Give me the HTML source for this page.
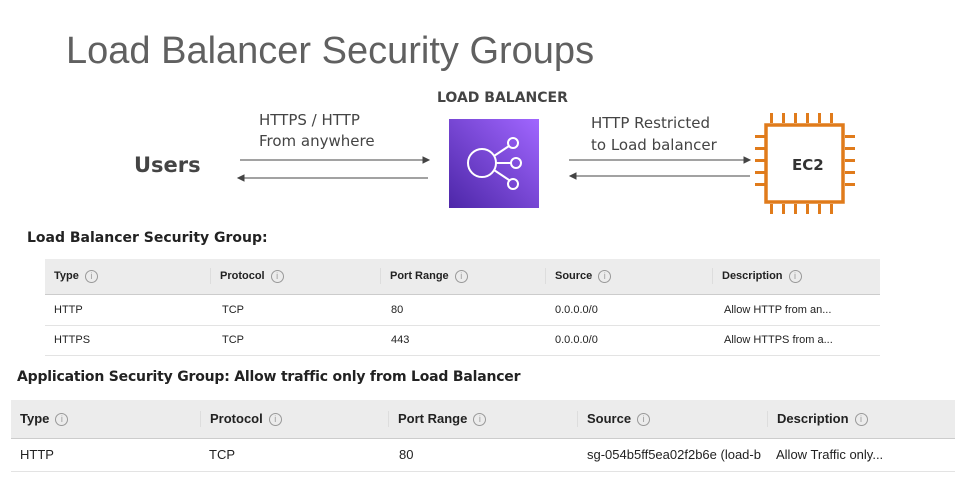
<!DOCTYPE html>
<html><head><style>
body{margin:0;width:961px;height:481px;background:#fff;position:relative;overflow:hidden;font-family:"Liberation Sans",sans-serif}
.a{position:absolute}
.t{position:absolute;font-family:"DejaVu Sans","Liberation Sans",sans-serif;color:#444;white-space:nowrap}
table{position:absolute;border-collapse:collapse;font-size:11px;color:#222}
th{background:#ececec;text-align:left;font-weight:bold;border-bottom:1px solid #ccc;padding:0;vertical-align:middle}
td{border-bottom:1px solid #e3e3e3;padding:0;vertical-align:middle}
th span.c,td span.c{display:block;padding-left:9px;line-height:16px}
th span.s{border-left:1px solid #ddd}
.i{display:inline-block;width:11px;height:11px;border:1px solid #999;border-radius:50%;font-size:9px;line-height:11px;text-align:center;color:#999;font-weight:normal;margin-left:6px;vertical-align:middle;font-style:normal}
</style></head><body>
<div class="t" style="left:66px;top:30px;font-size:38px;font-weight:300;color:#606060;font-family:'Liberation Sans',sans-serif">Load Balancer Security Groups</div>
<div class="t" style="left:437px;top:90px;font-size:14px;font-weight:bold">LOAD BALANCER</div>
<div class="t" style="left:259px;top:110px;font-size:15px;line-height:21px">HTTPS / HTTP<br>From anywhere</div>
<div class="t" style="left:591px;top:112px;font-size:15px;line-height:22px">HTTP Restricted<br>to Load balancer</div>
<div class="t" style="left:134px;top:153px;font-size:21px;font-weight:bold">Users</div>
<svg class="a" style="left:0;top:0" width="961" height="240">
<defs><linearGradient id="g" x1="0" y1="1" x2="1" y2="0"><stop offset="0" stop-color="#4d27a8"/><stop offset="1" stop-color="#a166ff"/></linearGradient></defs>
<g stroke="#444" stroke-width="1" fill="#444">
<line x1="240" y1="160" x2="425" y2="160"/><path d="M429 160l-6-3v6z"/>
<line x1="242" y1="178" x2="428" y2="178"/><path d="M238 178l6-3v6z"/>
<line x1="569" y1="160" x2="746" y2="160"/><path d="M750 160l-6-3v6z"/>
<line x1="574" y1="176" x2="750" y2="176"/><path d="M570 176l6-3v6z"/>
</g>
<rect x="449" y="119" width="90" height="89" fill="url(#g)"/>
<g stroke="#fff" stroke-width="2" fill="none">
<circle cx="482" cy="163" r="14"/><circle cx="513" cy="143" r="5"/><circle cx="516" cy="163" r="5"/><circle cx="513" cy="184" r="5"/>
<path d="M496 163h15M494 156l15-10M494 170l15 10"/></g>
<g fill="#e07b1b">
<rect x="766" y="125" width="77" height="77" fill="none" stroke="#e07b1b" stroke-width="3.5"/>
<rect x="770" y="113" width="3" height="10"/><rect x="782" y="113" width="3" height="10"/><rect x="794" y="113" width="3" height="10"/><rect x="806" y="113" width="3" height="10"/><rect x="818" y="113" width="3" height="10"/><rect x="830" y="113" width="3" height="10"/>
<rect x="770" y="204" width="3" height="10"/><rect x="782" y="204" width="3" height="10"/><rect x="794" y="204" width="3" height="10"/><rect x="806" y="204" width="3" height="10"/><rect x="818" y="204" width="3" height="10"/><rect x="830" y="204" width="3" height="10"/>
<rect x="755" y="135" width="10" height="3"/><rect x="755" y="147" width="10" height="3"/><rect x="755" y="159" width="10" height="3"/><rect x="755" y="171" width="10" height="3"/><rect x="755" y="183" width="10" height="3"/>
<rect x="845" y="135" width="10" height="3"/><rect x="845" y="147" width="10" height="3"/><rect x="845" y="159" width="10" height="3"/><rect x="845" y="171" width="10" height="3"/><rect x="845" y="183" width="10" height="3"/>
</g>
<text x="792" y="170" font-family="DejaVu Sans" font-weight="bold" font-size="15" fill="#333">EC2</text>
</svg>
<div class="t" style="left:27px;top:230px;font-size:14px;font-weight:bold;color:#222">Load Balancer Security Group:</div>
<table style="left:45px;top:259px;width:835px">
<tr style="height:35px"><th style="width:165px"><span class="c">Type<span class="i">i</span></span></th><th style="width:170px"><span class="c s">Protocol<span class="i">i</span></span></th><th style="width:165px"><span class="c s">Port Range<span class="i">i</span></span></th><th style="width:167px"><span class="c s">Source<span class="i">i</span></span></th><th><span class="c s">Description<span class="i">i</span></span></th></tr>
<tr style="height:31px"><td><span class="c">HTTP</span></td><td><span class="c" style="padding-left:12px">TCP</span></td><td><span class="c" style="padding-left:11px">80</span></td><td><span class="c" style="padding-left:10px">0.0.0.0/0</span></td><td><span class="c" style="padding-left:12px">Allow HTTP from an...</span></td></tr>
<tr style="height:30px"><td><span class="c">HTTPS</span></td><td><span class="c" style="padding-left:12px">TCP</span></td><td><span class="c" style="padding-left:11px">443</span></td><td><span class="c" style="padding-left:10px">0.0.0.0/0</span></td><td><span class="c" style="padding-left:12px">Allow HTTPS from a...</span></td></tr>
</table>
<div class="t" style="left:17px;top:369px;font-size:14px;font-weight:bold;color:#222;letter-spacing:-0.2px">Application Security Group: Allow traffic only from Load Balancer</div>
<table style="left:11px;top:400px;width:944px;font-size:13px">
<tr style="height:38px"><th style="width:189px"><span class="c">Type<span class="i">i</span></span></th><th style="width:188px"><span class="c s">Protocol<span class="i">i</span></span></th><th style="width:189px"><span class="c s">Port Range<span class="i">i</span></span></th><th style="width:190px"><span class="c s">Source<span class="i">i</span></span></th><th><span class="c s">Description<span class="i">i</span></span></th></tr>
<tr style="height:33px"><td><span class="c">HTTP</span></td><td><span class="c">TCP</span></td><td><span class="c" style="padding-left:11px">80</span></td><td><span class="c" style="padding-left:10px;white-space:nowrap;overflow:hidden;width:180px">sg-054b5ff5ea02f2b6e (load-b</span></td><td><span class="c">Allow Traffic only...</span></td></tr>
</table>
</body></html>
